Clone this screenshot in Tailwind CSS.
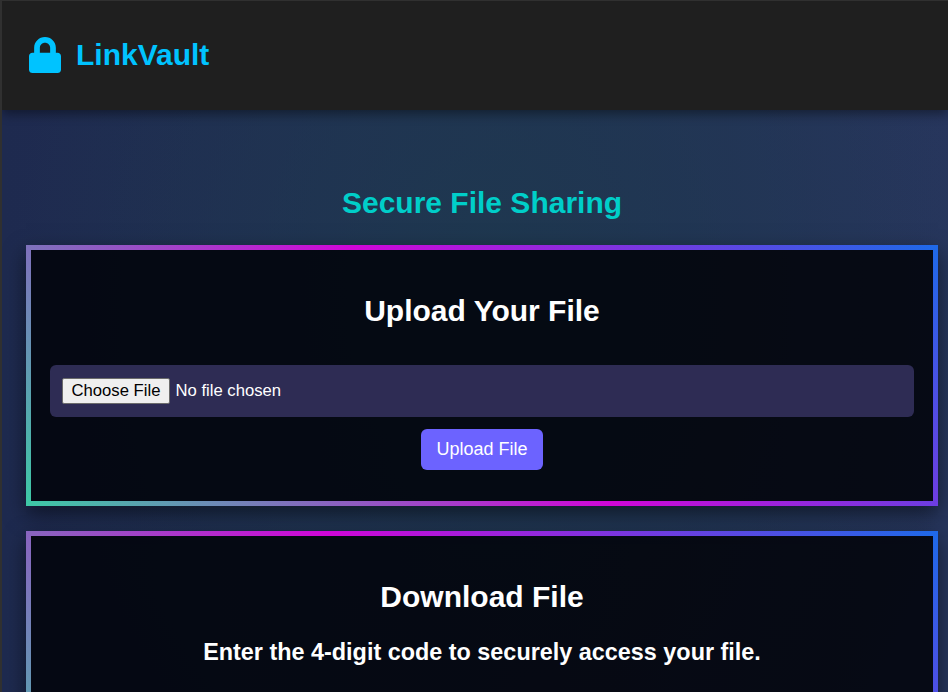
<!DOCTYPE html>
<html lang="en">
<head>
<meta charset="utf-8">
<title>LinkVault</title>
<script src="https://cdn.jsdelivr.net/npm/@tailwindcss/browser@4"></script>
</head>
<body class="h-[692px] overflow-hidden bg-[#303030] pl-[2px] pt-px font-['Liberation_Sans',Arial,sans-serif] text-white">
<div class="flex h-[691px] flex-col overflow-hidden bg-[radial-gradient(ellipse_480px_640px_at_490px_300px,#1e384f_0%,#1e384f00_100%),linear-gradient(90deg,#1e2a4f,#27365d)]">
  <header class="flex h-[109px] shrink-0 items-center bg-[#1f1f1f] pb-[2px] pl-[27px] shadow-[0_4px_10px_rgba(0,0,0,0.4)]">
    <svg class="h-9 w-8" viewBox="0 0 448 512" preserveAspectRatio="none" fill="#00c3ff"><path d="M400 224h-24v-72C376 68.200 307.800 0 224 0S72 68.200 72 152v72H48c-26.500 0-48 21.500-48 48v192c0 26.500 21.500 48 48 48h352c26.500 0 48-21.500 48-48V272c0-26.500-21.500-48-48-48zm-104 0H152v-72c0-39.700 32.300-72 72-72s72 32.300 72 72v72z"/></svg>
    <h1 class="ml-[15px] text-[30px] font-bold leading-9 text-[#00c3ff]">LinkVault</h1>
  </header>
  <main class="flex flex-col items-stretch pl-6 pr-[10px] pt-[75px] text-center">
    <h2 class="h-[60px] text-[30px] font-bold leading-9 text-[#00cec9]">Secure File Sharing</h2>
    <section class="flex h-[261px] shrink-0 flex-col items-center border-5 bg-[#010208]/85 px-[19px] pt-[43px] shadow-[0_8px_20px_rgba(0,0,0,0.5)] [border-image:linear-gradient(45deg,#3ec8a6,#d006d8_50%,#1f69e8)_1]">
      <h2 class="text-[30px] font-bold leading-9">Upload Your File</h2>
      <div class="mt-9 flex h-[52px] w-full items-center gap-[5.500px] rounded-md bg-[#2e2c54] px-3">
        <button class="h-[26px] w-[108px] rounded-[2px] border border-[#6b6b6b] bg-[#efefef] text-[16.670px] leading-6 text-black">Choose File</button>
        <span class="text-[16.670px] leading-6">No file chosen</span>
      </div>
      <button class="mt-3 h-[41px] w-[122px] rounded-md bg-[#6c63ff] text-[18px]">Upload File</button>
    </section>
    <section class="mt-[25px] flex h-[314px] shrink-0 flex-col items-center border-5 bg-[#010208]/85 px-[19px] pt-[43px] shadow-[0_8px_20px_rgba(0,0,0,0.5)] [border-image:linear-gradient(45deg,#3ec8a6,#d006d8_50%,#1f69e8)_1]">
      <h2 class="text-[30px] font-bold leading-9">Download File</h2>
      <h3 class="mt-[23px] text-[23.400px] font-bold leading-7">Enter the 4-digit code to securely access your file.</h3>
    </section>
  </main>
</div>
</body>
</html>
